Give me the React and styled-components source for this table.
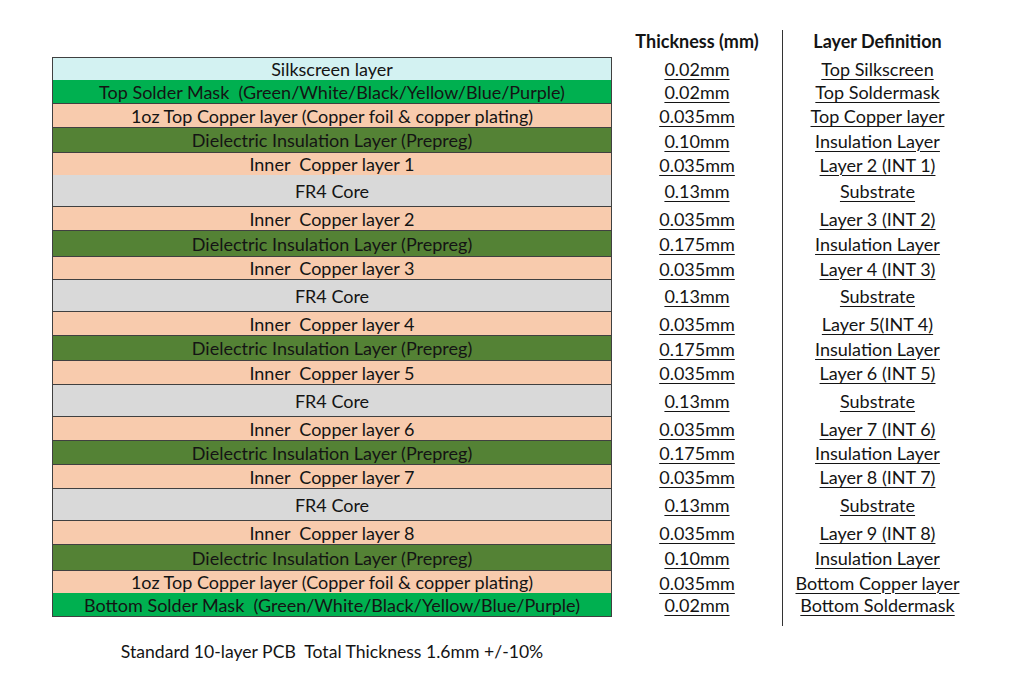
import React from "react";
import styled, { createGlobalStyle } from "styled-components";

const GlobalStyle = createGlobalStyle`
  body {
    margin: 0;
    background: #ffffff;
    font-family: Lato, "Open Sans", sans-serif;
    color: #141414;
  }
`;

const colors = {
  silk: "#d3f2f2",
  mask: "#00b050",
  copper: "#f8cbad",
  prepreg: "#548235",
  core: "#d9d9d9",
};

const layers = [
  { name: "Silkscreen layer", kind: "silk", h: 23, t: "0.02mm", def: "Top Silkscreen" },
  { name: "Top Solder Mask  (Green/White/Black/Yellow/Blue/Purple)", kind: "mask", h: 24, t: "0.02mm", def: "Top Soldermask" },
  { name: "1oz Top Copper layer (Copper foil & copper plating)", kind: "copper", h: 24, t: "0.035mm", def: "Top Copper layer" },
  { name: "Dielectric Insulation Layer (Prepreg)", kind: "prepreg", h: 25, t: "0.10mm", def: "Insulation Layer" },
  { name: "Inner  Copper layer 1", kind: "copper", h: 22, t: "0.035mm", def: "Layer 2 (INT 1)" },
  { name: "FR4 Core", kind: "core", h: 32, t: "0.13mm", def: "Substrate" },
  { name: "Inner  Copper layer 2", kind: "copper", h: 24, t: "0.035mm", def: "Layer 3 (INT 2)" },
  { name: "Dielectric Insulation Layer (Prepreg)", kind: "prepreg", h: 26, t: "0.175mm", def: "Insulation Layer" },
  { name: "Inner  Copper layer 3", kind: "copper", h: 23, t: "0.035mm", def: "Layer 4 (INT 3)" },
  { name: "FR4 Core", kind: "core", h: 32, t: "0.13mm", def: "Substrate" },
  { name: "Inner  Copper layer 4", kind: "copper", h: 24, t: "0.035mm", def: "Layer 5(INT 4)" },
  { name: "Dielectric Insulation Layer (Prepreg)", kind: "prepreg", h: 25, t: "0.175mm", def: "Insulation Layer" },
  { name: "Inner  Copper layer 5", kind: "copper", h: 24, t: "0.035mm", def: "Layer 6 (INT 5)" },
  { name: "FR4 Core", kind: "core", h: 32, t: "0.13mm", def: "Substrate" },
  { name: "Inner  Copper layer 6", kind: "copper", h: 24, t: "0.035mm", def: "Layer 7 (INT 6)" },
  { name: "Dielectric Insulation Layer (Prepreg)", kind: "prepreg", h: 24, t: "0.175mm", def: "Insulation Layer" },
  { name: "Inner  Copper layer 7", kind: "copper", h: 24, t: "0.035mm", def: "Layer 8 (INT 7)" },
  { name: "FR4 Core", kind: "core", h: 32, t: "0.13mm", def: "Substrate" },
  { name: "Inner  Copper layer 8", kind: "copper", h: 24, t: "0.035mm", def: "Layer 9 (INT 8)" },
  { name: "Dielectric Insulation Layer (Prepreg)", kind: "prepreg", h: 26, t: "0.10mm", def: "Insulation Layer" },
  { name: "1oz Top Copper layer (Copper foil & copper plating)", kind: "copper", h: 22, t: "0.035mm", def: "Bottom Copper layer" },
  { name: "Bottom Solder Mask  (Green/White/Black/Yellow/Blue/Purple)", kind: "mask", h: 24, t: "0.02mm", def: "Bottom Soldermask" },
];

function App() {
  return (
    <>
      <GlobalStyle />
      <Page>
        <Stack>
          <Row h={27}>
            <Blank />
            <HeadCell>Thickness (mm)</HeadCell>
            <HeadCell divider>Layer Definition</HeadCell>
          </Row>
          {layers.map((l, i) => (
            <Row key={i} h={l.h}>
              <LayerCell kind={l.kind} first={i === 0}>
                {l.name}
              </LayerCell>
              <ValueCell>
                <Link>{l.t}</Link>
              </ValueCell>
              <ValueCell divider>
                <Link>{l.def}</Link>
              </ValueCell>
            </Row>
          ))}
          <Row h={9}>
            <Blank />
            <Blank />
            <ValueCell divider />
          </Row>
        </Stack>
        <Footer>Standard 10-layer PCB  Total Thickness 1.6mm +/-10%</Footer>
      </Page>
    </>
  );
}

export default App;

const Page = styled.div`
  padding: 30px 0 0 52px;
  width: 920px;
`;

const Stack = styled.div`
  display: flex;
  flex-direction: column;
`;

const Row = styled.div`
  display: grid;
  grid-template-columns: 560px 170px 190px;
  height: ${(props) => props.h}px;
`;

const Blank = styled.div``;

const HeadCell = styled.div`
  display: flex;
  align-items: center;
  justify-content: center;
  font-weight: 700;
  font-size: 18px;
  padding-bottom: 6px;
  border-left: ${(props) => (props.divider ? "1.5px solid #333" : "none")};
`;

const LayerCell = styled.div`
  box-sizing: border-box;
  display: flex;
  align-items: center;
  justify-content: center;
  white-space: pre;
  font-size: 18px;
  background: ${(props) => colors[props.kind]};
  border: 1px solid #404040;
  border-left-width: 1.5px;
  border-top-width: ${(props) => (props.first ? "1px" : "0")};
`;

const ValueCell = styled.div`
  display: flex;
  align-items: center;
  justify-content: center;
  font-size: 18px;
  border-left: ${(props) => (props.divider ? "1.5px solid #333" : "none")};
`;

const Link = styled.span`
  text-decoration: underline;
  text-underline-offset: 3px;
  text-decoration-thickness: 1px;
`;

const Footer = styled.div`
  width: 560px;
  text-align: center;
  white-space: pre;
  font-size: 17.6px;
  margin-top: 15px;
`;
